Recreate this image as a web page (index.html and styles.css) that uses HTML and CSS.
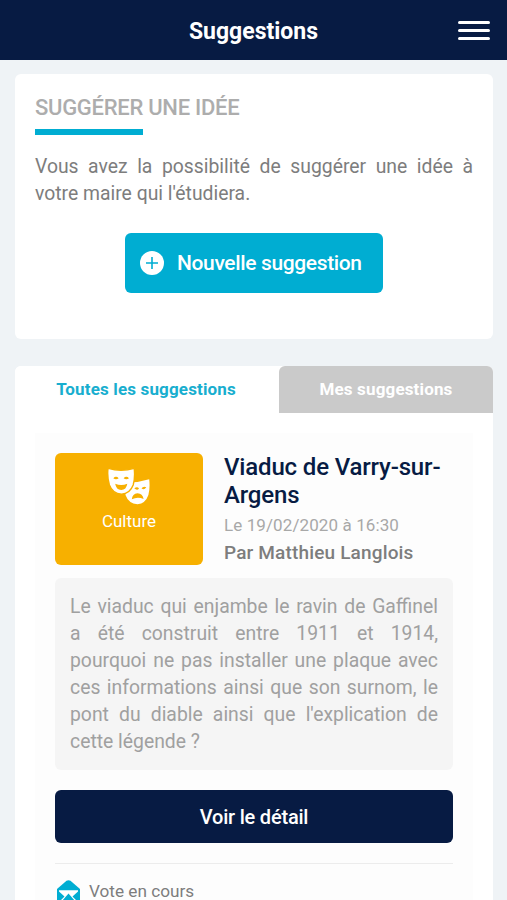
FILE: index.html
```
<!DOCTYPE html>
<html lang="fr">
<head>
  <meta charset="UTF-8">
  <meta name="viewport" content="width=device-width, initial-scale=1.0">
  <title>Suggestions</title>
  <link rel="stylesheet" href="styles.css">
</head>
<body>
  <header class="topbar">
    <h1>Suggestions</h1>
    <button class="menu" aria-label="Menu">
      <span></span>
      <span></span>
      <span></span>
    </button>
  </header>

  <main>
    <section class="intro">
      <h2>SUGGÉRER UNE IDÉE</h2>
      <div class="underline"></div>
      <p>Vous avez la possibilité de suggérer une idée à votre maire qui l'étudiera.</p>
      <button class="btn-new">
        <svg width="24" height="24" viewBox="0 0 24 24">
          <circle cx="12" cy="12" r="12" fill="#fff"/>
          <path d="M12 6v12M6 12h12" stroke="#00add2" stroke-width="1.6"/>
        </svg>
        <span>Nouvelle suggestion</span>
      </button>
    </section>

    <section class="list">
      <nav class="tabs">
        <a class="tab active">Toutes les suggestions</a>
        <a class="tab">Mes suggestions</a>
      </nav>

      <article class="suggestion">
        <div class="top">
          <div class="category">
            <svg width="42" height="37" viewBox="0 0 42 37">
              <path fill="#fff" d="M17 14.5Q29 15 41.2 11.2Q42.2 20 40.4 27Q37.5 35.5 29.5 36.3Q20.5 35.5 17.5 27Z"/>
              <path fill="#fff" stroke="#f7b000" stroke-width="1.4" d="M0 0.3Q13 4.3 26.2 0.3Q27.3 9 25.2 17Q22 25.5 13.5 26.3Q4.5 25.5 1.4 17Q-1 9 0 0.3Z"/>
              <g fill="#f7b000">
                <path d="M5.3 10.3Q8 7.4 10.7 10.3Q8 12.3 5.3 10.3ZM15.6 10.3Q18.3 7.4 21 10.3Q18.3 12.3 15.6 10.3Z"/>
                <path d="M7.2 15.8Q13.2 18.4 19.3 15.8Q18.3 22 13.2 22Q8.2 22 7.2 15.8Z"/>
                <path d="M26.3 20.2Q29 23 31 20.5Q29.5 18.3 26.3 20.2ZM33.5 20.2Q36 22.5 38.3 19.2Q35.5 17.8 33.5 20.2Z"/>
                <path d="M23.8 31.2Q24.4 25.8 29.5 25.3Q34.6 25.6 35.6 31Q29.7 28.2 23.8 31.2Z"/>
              </g>
            </svg>
            <span>Culture</span>
          </div>
          <div class="infos">
            <h3>Viaduc de Varry-sur-Argens</h3>
            <div class="date">Le 19/02/2020 à 16:30</div>
            <div class="author">Par Matthieu Langlois</div>
          </div>
        </div>
        <p class="description">Le viaduc qui enjambe le ravin de Gaffinel a été construit entre 1911 et 1914, pourquoi ne pas installer une plaque avec ces informations ainsi que son surnom, le pont du diable ainsi que l'explication de cette légende ?</p>
        <button class="btn-detail">Voir le détail</button>
        <div class="status">
          <svg width="23" height="25" viewBox="0 0 23 25">
            <path fill="#00add2" d="M0 9L9.5 0.8Q11.5 -0.5 13.5 0.8L23 9V23Q23 25 21 25H2Q0 25 0 23Z"/>
            <path fill="#fff" d="M2 10.2H21V11.5L15.5 16.5L20 21H18L11.5 13.5L5 21H3L7.5 16.5L2 11.5Z"/>
          </svg>
          <span>Vote en cours</span>
        </div>
      </article>
    </section>
  </main>
</body>
</html>
```
FILE: styles.css
```
* {
  box-sizing: border-box;
}
html {
  height: 100%;
  overflow: hidden;
}
body {
  margin: 0;
  height: 100%;
  overflow: hidden;
  background: #eff3f6;
  font-family: Roboto, sans-serif;
  color: #7d7d7d;
}
h1, h2, h3, p {
  margin: 0;
}
button {
  border: 0;
  padding: 0;
  font-family: inherit;
}
.topbar {
  display: grid;
  grid-template-columns: 1fr auto 1fr;
  align-items: center;
  height: 60px;
  padding: 1px 17px 0;
  background: #071b43;
  color: #fff;
}
.topbar h1 {
  grid-column: 2;
  padding-top: 1px;
  font-size: 23px;
  font-weight: 700;
}
.menu {
  justify-self: end;
  display: flex;
  flex-direction: column;
  gap: 5px;
  width: 32px;
  background: none;
}
.menu span {
  height: 3px;
  border-radius: 2px;
  background: #fff;
}
main {
  padding: 14px 14px 0 15px;
}
.intro {
  height: 265px;
  padding: 20px 20px 0;
  border-radius: 6px;
  background: #fff;
}
.intro h2 {
  font-size: 22px;
  font-weight: 500;
  letter-spacing: -0.28px;
  line-height: 28px;
  color: #adadad;
}
.underline {
  width: 108px;
  height: 6px;
  margin: 7px 0 18px;
  background: #00add2;
}
.intro p {
  font-size: 19.35px;
  line-height: 27px;
  text-align: justify;
}
.btn-new {
  display: flex;
  align-items: center;
  gap: 13px;
  width: 258px;
  height: 60px;
  margin: 26px auto 0 90px;
  padding-left: 15px;
  border-radius: 6px;
  background: #00add2;
  color: #fff;
  font-size: 21px;
  font-weight: 500;
  letter-spacing: -0.36px;
}
.list {
  margin-top: 27px;
  border-radius: 6px 6px 0 0;
  background: #fff;
}
.tabs {
  display: grid;
  grid-template-columns: 264px 1fr;
}
.tab {
  height: 47px;
  line-height: 47px;
  border-radius: 6px 6px 0 0;
  background: #cacaca;
  color: #fff;
  font-size: 17px;
  font-weight: 700;
  letter-spacing: 0.15px;
  text-align: center;
}
.tab.active {
  background: #fff;
  color: #18aecf;
  padding-right: 2px;
}
.suggestion {
  margin: 20px 20px 0;
  padding: 20px;
  background: #fdfdfd;
}
.top {
  display: flex;
  gap: 21px;
}
.category {
  display: flex;
  flex-direction: column;
  align-items: center;
  flex: none;
  width: 148px;
  height: 112px;
  padding-top: 15px;
  border-radius: 6px;
  background: #f7b000;
  color: #fff;
  font-size: 17px;
  line-height: 33px;
}
.infos h3 {
  font-size: 24px;
  font-weight: 500;
  letter-spacing: -0.16px;
  line-height: 28px;
  color: #071b43;
}
.date {
  margin-top: 3px;
  font-size: 17px;
  letter-spacing: 0.1px;
  line-height: 27px;
  color: #a8a8a8;
}
.author {
  font-size: 19px;
  font-weight: 500;
  letter-spacing: 0.16px;
  line-height: 28px;
}
.description {
  height: 192px;
  margin-top: 11px;
  padding: 15px;
  border-radius: 6px;
  background: #f5f5f5;
  color: #a0a0a0;
  font-size: 19.35px;
  line-height: 27px;
  text-align: justify;
}
.btn-detail {
  display: block;
  width: 100%;
  height: 53px;
  margin: 20px 0;
  border-radius: 6px;
  background: #071b43;
  color: #fff;
  font-size: 20px;
  font-weight: 500;
  letter-spacing: -0.2px;
}
.status {
  display: flex;
  gap: 9px;
  padding: 16px 2px 0;
  border-top: 1px solid #ececec;
  font-size: 17.2px;
  line-height: 22px;
}
```
